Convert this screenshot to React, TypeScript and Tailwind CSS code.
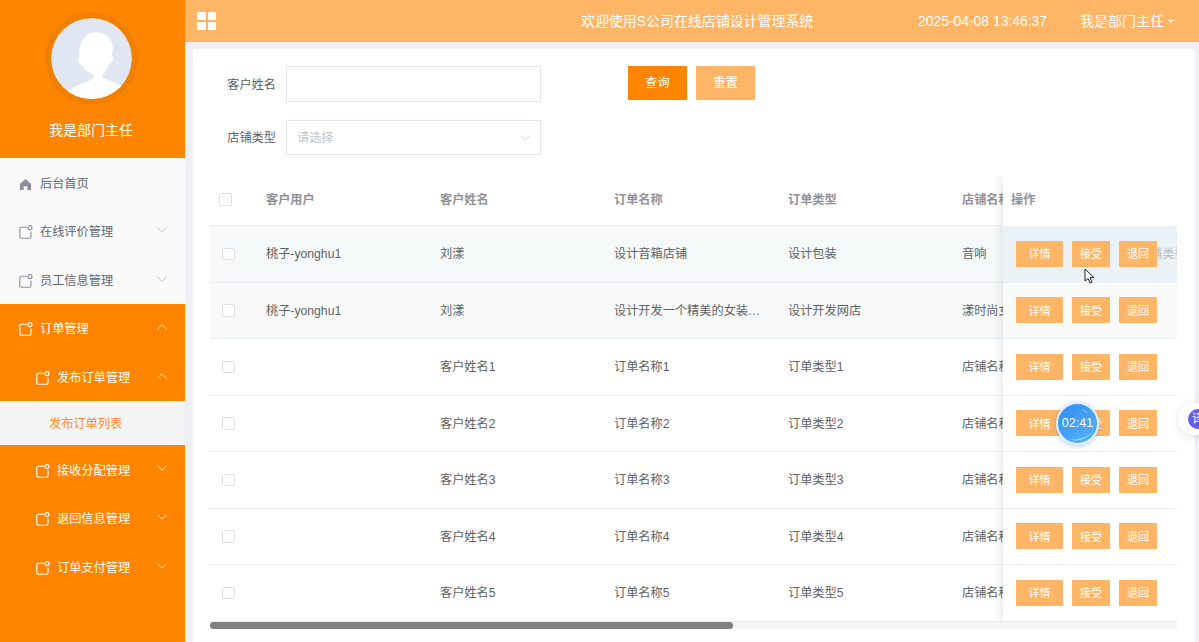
import { ChevronDown, ChevronUp } from "lucide-react"

const FONT = "font-['Liberation_Sans','Noto_Sans_CJK_SC',sans-serif]"

const rows = [
  { user: "桃子-yonghu1", name: "刘漾", order: "设计音箱店铺", type: "设计包装", shop: "音响" },
  { user: "桃子-yonghu1", name: "刘漾", order: "设计开发一个精美的女装网店", type: "设计开发网店", shop: "漾时尚女装" },
  { user: "", name: "客户姓名1", order: "订单名称1", type: "订单类型1", shop: "店铺名称1" },
  { user: "", name: "客户姓名2", order: "订单名称2", type: "订单类型2", shop: "店铺名称2" },
  { user: "", name: "客户姓名3", order: "订单名称3", type: "订单类型3", shop: "店铺名称3" },
  { user: "", name: "客户姓名4", order: "订单名称4", type: "订单类型4", shop: "店铺名称4" },
  { user: "", name: "客户姓名5", order: "订单名称5", type: "订单类型5", shop: "店铺名称5" },
]

function MenuIcon({ className }: { className?: string }) {
  return (
    <svg viewBox="0 0 14 14" fill="none" stroke="currentColor" strokeWidth="1.15" className={className}>
      <path d="M8.2 2.2H2.4A1.6 1.6 0 0 0 .8 3.8v7.8a1.6 1.6 0 0 0 1.6 1.6h8a1.6 1.6 0 0 0 1.6-1.6V6.4" />
      <circle cx="11" cy="2.6" r="2" />
    </svg>
  )
}

function HomeIcon() {
  return (
    <svg viewBox="0 0 14 14" fill="#8a8f99" className="h-[13px] w-[13px]">
      <path d="M7 1 13 6.4V13H9V9H5v4H1V6.4Z" />
    </svg>
  )
}

function MenuRow({
  label,
  indent = false,
  open = false,
  light = false,
}: {
  label: string
  indent?: boolean
  open?: boolean
  light?: boolean
}) {
  const Chevron = open ? ChevronUp : ChevronDown
  return (
    <div
      className={`flex h-[48.7px] items-center pr-[14px] pt-[2px] ${indent ? "pl-[36px]" : "pl-[19px]"} ${
        light ? "text-[#5f6673]" : "text-white"
      }`}
    >
      <MenuIcon className={`h-[14px] w-[14px] ${light ? "text-[#8f949c]" : "text-white"}`} />
      <span className="ml-[7px] flex-1 text-[12.2px]">{label}</span>
      <Chevron className={`mt-[-5px] h-[18px] w-[18px] ${light ? "text-[#a9adb5]" : "text-white"}`} strokeWidth={1} />
    </div>
  )
}

function Sidebar() {
  return (
    <aside className="flex h-full w-[185px] shrink-0 flex-col bg-[#ff8500]">
      <div className="flex h-[158px] flex-col items-center pr-[3px]">
        <div className="mt-[14px] h-[89px] w-[89px] rounded-full border-[4px] border-[#f08000] shadow-[0_0_3px_#c96b00]">
          <svg viewBox="0 0 80 80" className="h-full w-full rounded-full">
            <circle cx="40" cy="40" r="40" fill="#e0e7f2" />
            <path
              d="M44 14c10 0 17 6 17 16 0 3-1 5-1 7 1 2 2 3 1 5-1 2-3 3-4 4-1 4-3 7-6 9v4c6 3 12 4 17 7 3 2 5 5 6 18H14c1-8 2-12 6-14 8-5 16-7 22-10v-4c-5-2-9-5-11-9-2-1-4-3-4-5 0-2 1-3 1-5-1-13 6-23 16-23Z"
              fill="#fff"
            />
          </svg>
        </div>
        <div className="mt-[17px] text-[14px] leading-[20px] text-white">我是部门主任</div>
      </div>

      <div className="h-[146px] bg-[#fafafa]">
        <div className="flex h-[49px] items-center pl-[19px] pt-[3px] text-[#5f6673]">
          <HomeIcon />
          <span className="ml-[8px] text-[12.2px]">后台首页</span>
        </div>
        <MenuRow label="在线评价管理" light />
        <MenuRow label="员工信息管理" light />
      </div>

      <MenuRow label="订单管理" open />
      <MenuRow label="发布订单管理" indent open />
      <div className="flex h-[44px] items-center bg-[#f4f4f4] pl-[49px] pt-[2px] text-[12.2px] text-[#ff8d2b]">发布订单列表</div>
      <MenuRow label="接收分配管理" indent />
      <MenuRow label="退回信息管理" indent />
      <MenuRow label="订单支付管理" indent />
    </aside>
  )
}

function Header() {
  return (
    <header className="flex h-[42px] shrink-0 items-center bg-[#ffb566] text-white">
      <div className="ml-[12px] grid grid-cols-2 gap-[2px]">
        <span className="h-[8px] w-[8.5px] rounded-[1px] bg-white" />
        <span className="h-[8px] w-[8.5px] rounded-[1px] bg-white" />
        <span className="h-[8px] w-[8.5px] rounded-[1px] bg-white" />
        <span className="h-[8px] w-[8.5px] rounded-[1px] bg-white" />
      </div>
      <div className="ml-[365px] w-[232px] whitespace-nowrap text-[13.95px]">欢迎使用S公司在线店铺设计管理系统</div>
      <div className="ml-[105px] text-[13.9px]">2025-04-08 13:46:37</div>
      <div className="ml-[33px] text-[14px]">我是部门主任</div>
      <ChevronDown className="ml-[3px] h-[8px] w-[8px]" strokeWidth={4} />
    </header>
  )
}

function SearchForm() {
  return (
    <div className="pt-[17px] text-[12.2px] text-[#606266]">
      <div className="flex items-start">
        <span className="w-[66px] pt-[1px] text-right leading-[36px]">客户姓名</span>
        <div className="ml-[10px] h-[36px] w-[255px] border border-[#e4e7ed] bg-white" />
        <button className="ml-[87px] h-[34px] w-[59px] bg-[#ff8500] text-white">查询</button>
        <button className="ml-[9px] h-[34px] w-[59px] bg-[#ffb566] text-white">重置</button>
      </div>
      <div className="mt-[17px] flex items-center">
        <span className="w-[66px] pt-[1px] text-right">店铺类型</span>
        <div className="ml-[10px] flex h-[35px] w-[255px] items-center justify-between border border-[#e4e7ed] bg-white pl-[10px] pr-[6px] text-[#c0c4cc]">
          <span className="pt-[1px]">请选择</span>
          <ChevronDown className="h-[18px] w-[18px] text-[#c0c4cc]" strokeWidth={1} />
        </div>
      </div>
    </div>
  )
}

function Checkbox({ className }: { className?: string }) {
  return <span className={`block h-[12.5px] w-[12.5px] rounded-[2px] border border-[#dcdfe6] bg-white ${className ?? ""}`} />
}

function Cell({ children, head = false }: { children?: React.ReactNode; head?: boolean }) {
  return (
    <div className={`w-[174px] shrink-0 truncate pl-[10px] pr-[10px] pt-[1px] ${head ? "font-bold text-[#909399]" : ""}`}>
      {children}
    </div>
  )
}

function rowBg(i: number) {
  if (i === 0) return "bg-[#f6f9f9]"
  if (i === 1) return "bg-[#f8fafa]"
  return "bg-white"
}

function DataTable() {
  return (
    <div className="relative mt-[21px] h-[446px] w-[967px] overflow-hidden text-[12.2px] text-[#606266]">
      <div className="w-[1200px]">
        <div className="flex h-[50px] items-center border-b border-[#ebeef5] pb-[2px]">
          <div className="w-[46px] shrink-0 pl-[9px]">
            <Checkbox />
          </div>
          <Cell head>客户用户</Cell>
          <Cell head>客户姓名</Cell>
          <Cell head>订单名称</Cell>
          <Cell head>订单类型</Cell>
          <Cell head>店铺名称</Cell>
        </div>
        {rows.map((r, i) => (
          <div key={i} className={`flex h-[56.5px] items-center border-b border-[#ebeef5] ${rowBg(i)}`}>
            <div className="w-[46px] shrink-0 pl-[12px]">
              <Checkbox />
            </div>
            <Cell>{r.user}</Cell>
            <Cell>{r.name}</Cell>
            <Cell>{r.order}</Cell>
            <Cell>{r.type}</Cell>
            <Cell>{r.shop}</Cell>
          </div>
        ))}
      </div>

      {/* fixed operation column */}
      <div className="absolute right-0 top-0 h-full w-[174px] bg-white shadow-[-4px_0_8px_rgba(0,0,0,0.07)]">
        <div className="flex h-[50px] items-center border-b border-white pb-[2px] pl-[8px] pt-[1px] font-bold text-[#909399]">操作</div>
        {rows.map((r, i) => (
          <div
            key={i}
            className={`flex h-[56.5px] items-center overflow-hidden border-b border-[#ebeef5] pl-[13px] text-[11px] text-white ${
              i === 0 ? "bg-[#eaf1f7]" : i === 1 ? "bg-[#f8fafa]" : "bg-white"
            }`}
          >
            <button className="h-[26px] w-[47px] bg-[#ffb566] pt-[1px]">详情</button>
            <button className="ml-[9px] h-[26px] w-[38px] bg-[#ffb566] pt-[1px]">接受</button>
            <button className="relative z-10 ml-[9px] h-[26px] w-[38px] bg-[#ffb566] pt-[1px]">退回</button>
            {i === 0 && <span className="ml-[-7px] w-[27px] shrink-0 overflow-hidden whitespace-nowrap text-[12.2px] text-[#b9bfc4]">铺类型</span>}
          </div>
        ))}
      </div>
    </div>
  )
}

function ScrollBar() {
  return (
    <div className="h-[7px] w-[967px] bg-[#f5f5f5]">
      <div className="h-full w-[523px] rounded-full bg-[#808080]" />
    </div>
  )
}

function Cursor() {
  return (
    <svg viewBox="0 0 12 17" className="absolute left-[1084px] top-[268px] h-[17px] w-[12px]">
      <path d="M1 1v12l3-2.6 2 4.6 2-.9-2-4.5h4Z" fill="#fff" stroke="#222" strokeWidth="1" strokeLinejoin="round" />
    </svg>
  )
}

function Timer() {
  return (
    <div className="absolute left-[1056px] top-[402px] flex h-[43px] w-[43px] items-center justify-center rounded-full border-[2px] border-[#e3f0fb] bg-[linear-gradient(145deg,#2f8cf5,#59b4fb)] text-[12.5px] text-white shadow-[0_1px_5px_rgba(40,120,220,0.4)]">
      <svg viewBox="0 0 39 39" fill="none" className="absolute inset-0 h-full w-full">
        <path d="M24 5.5l5 3" stroke="#cfe6ff" strokeWidth="0.8" strokeDasharray="1.5 1" />
        <path d="M10 35c9 2 19-1 25-8-4 7-15 12-25 8Z" fill="#a9dcff" />
      </svg>
      <span className="relative">02:41</span>
    </div>
  )
}

function TranslateBubble() {
  return (
    <div className="absolute left-[1178px] top-[403px] flex h-[32px] w-[40px] items-center rounded-l-full bg-white pl-[10px] shadow-[0_2px_10px_rgba(0,0,0,0.12)]">
      <span className="flex h-[20px] w-[20px] shrink-0 items-center justify-center rounded-full bg-[linear-gradient(135deg,#7a5cf0,#4a5de8)] text-[12px] text-white">译</span>
    </div>
  )
}

export default function App() {
  return (
    <div className={`relative flex h-[642px] w-[1199px] overflow-hidden bg-[#eef0f5] ${FONT}`}>
      <Sidebar />
      <main className="flex min-w-0 flex-1 flex-col">
        <Header />
        <div className="ml-[8px] mr-[4px] mt-[7px] flex-1 overflow-hidden bg-white pl-[17px]">
          <SearchForm />
          <DataTable />
          <ScrollBar />
        </div>
      </main>
      <Cursor />
      <Timer />
      <TranslateBubble />
    </div>
  )
}
